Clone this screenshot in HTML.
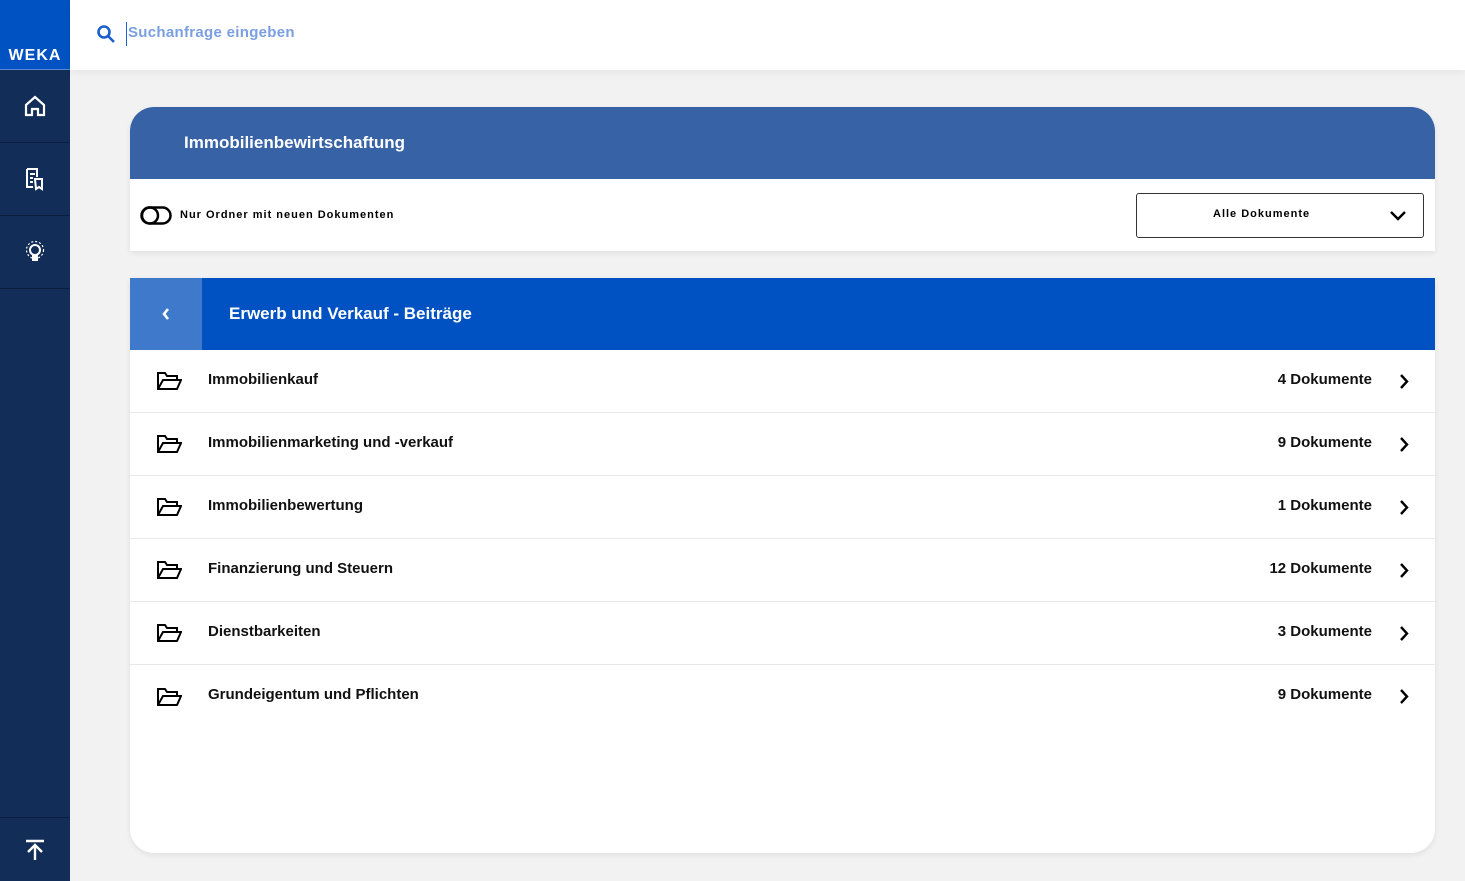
<!DOCTYPE html>
<html><head><meta charset="utf-8"><style>
*{box-sizing:border-box;margin:0;padding:0}
body{width:1465px;height:881px;background:#f2f2f2;font-family:"Liberation Sans",sans-serif;position:relative;overflow:hidden}
.side{position:absolute;left:0;top:0;width:70px;height:881px;background:#122d57}
.logo{height:70px;background:#0052c2;color:#fff;font-weight:bold;font-size:16px;letter-spacing:1px;padding-top:47px;text-align:center;border-bottom:1px solid #5a8ad8}
.nav{height:73px;border-bottom:1px solid #0a1f3f;display:flex;align-items:center;justify-content:center}
.top{position:absolute;left:70px;top:0;right:0;height:70px;background:#fff;box-shadow:0 2px 8px rgba(0,0,0,.06)}
.card1{position:absolute;left:130px;top:107px;width:1305px;height:144px;background:#fff;border-radius:24px 24px 0 0;overflow:hidden;box-shadow:0 2px 6px rgba(0,0,0,.08)}
.hd{height:72px;background:#3762a5;color:#fff;font-size:17px;font-weight:bold;padding:26px 0 0 54px}
.card2{position:absolute;left:130px;top:278px;width:1305px;height:575px;background:#fff;border-radius:0 0 24px 24px;box-shadow:0 2px 6px rgba(0,0,0,.08);overflow:hidden}
.bar{height:72px;background:#0052c2;display:flex;color:#fff;font-size:17px;font-weight:bold}
.row{height:63px;border-bottom:1px solid #e8e8e8;display:flex;align-items:center;font-size:15px;font-weight:bold;color:#111;position:relative}
.row .t{position:absolute;left:78px;top:21px}
.row .c{position:absolute;right:63px;top:21px}
.row svg{position:absolute}
</style></head><body>
<div class="side">
<div class="logo">WEKA</div>
<div class="nav"><svg width="24" height="24" viewBox="0 0 24 24" fill="none" stroke="#fff" stroke-width="2.2"><path d="M3 11L12 3l9 8v10h-6v-6h-6v6H3z"/></svg></div>
<div class="nav"><svg width="22" height="24" viewBox="0 0 22 24" fill="none" stroke="#fff" stroke-width="2"><path d="M3 2h10v8M3 2v18h6M6 7h5M6 11h3M6 15h3M11 12h7v10l-3-2-3 2z"/></svg></div>
<div class="nav"><svg width="22" height="24" viewBox="0 0 22 24" fill="none" stroke="#fff" stroke-width="2"><circle cx="11" cy="10" r="5"/><path d="M9 16h4v4h-4z" fill="#fff"/><circle cx="11" cy="10" r="8.5" stroke-dasharray="2 2" stroke-width="1.2"/></svg></div>
<div style="position:absolute;bottom:0;width:70px;height:64px;border-top:1px solid #0a1f3f;display:flex;align-items:center;justify-content:center"><svg width="22" height="24" viewBox="0 0 22 24" fill="none" stroke="#fff" stroke-width="2.4"><path d="M2 3h18M11 22V8M4 14l7-7 7 7"/></svg></div>
</div>
<div class="top">
<svg style="position:absolute;left:26px;top:24px" width="20" height="20" viewBox="0 0 20 20" fill="none" stroke="#1a5fd0" stroke-width="2.6"><circle cx="8" cy="8" r="5.5"/><path d="M12 12l6 6"/></svg>
<div style="position:absolute;left:56px;top:22px;width:1px;height:24px;background:#1a5fd0"></div>
<div style="position:absolute;left:58px;top:24px;color:#7a9fe0;font-size:15px;font-weight:bold;letter-spacing:.3px">Suchanfrage eingeben</div>
</div>
<div class="card1">
<div class="hd">Immobilienbewirtschaftung</div>
<svg style="position:absolute;left:10px;top:99px" width="32" height="19" viewBox="0 0 32 19" fill="none" stroke="#000" stroke-width="2.5"><rect x="1.5" y="1.5" width="29" height="16" rx="8"/><circle cx="10" cy="9.5" r="8"/></svg>
<div style="position:absolute;left:50px;top:102px;font-size:11px;font-weight:bold;letter-spacing:1px">Nur Ordner mit neuen Dokumenten</div>
<div style="position:absolute;left:1006px;top:86px;width:288px;height:45px;border:1px solid #333;border-radius:3px;font-size:11px;font-weight:bold;letter-spacing:1px;padding:14px 0 0 76px">Alle Dokumente
<svg style="position:absolute;right:16px;top:16px" width="18" height="11" viewBox="0 0 18 11" fill="none" stroke="#000" stroke-width="2.4"><path d="M2 2l7 7 7-7"/></svg></div>
</div>
<div class="card2">
<div class="bar"><div style="width:72px;background:#3f79cc;display:flex;align-items:center;justify-content:center"><svg width="10" height="16" viewBox="0 0 10 16" fill="none" stroke="#fff" stroke-width="2.6"><path d="M7 3L3 8l4 5"/></svg></div><div style="padding:26px 0 0 27px">Erwerb und Verkauf - Beiträge</div></div>
<script>
const r=[["Immobilienkauf","4"],["Immobilienmarketing und -verkauf","9"],["Immobilienbewertung","1"],["Finanzierung und Steuern","12"],["Dienstbarkeiten","3"],["Grundeigentum und Pflichten","9"]];
r.forEach((x,i)=>document.write(`<div class="row"${i==5?' style="border:none"':''}><svg style="left:27px" width="25" height="18" viewBox="0 0 25 18" fill="none" stroke="#000" stroke-width="2"><path d="M1 17V1h7l2 3h10v4M1 17h19l4-9H6z"/></svg><span class="t">${x[0]}</span><span class="c">${x[1]} Dokumente</span><svg style="right:26px" width="10" height="17" viewBox="0 0 10 17" fill="none" stroke="#000" stroke-width="2.4"><path d="M2 2l6 6.5L2 15"/></svg></div>`));
</script>
</div>
</body></html>
